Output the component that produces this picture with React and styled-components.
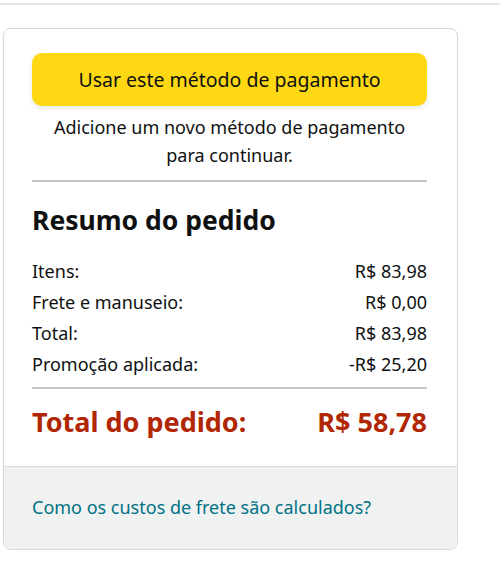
import React from 'react'
import styled, { createGlobalStyle } from 'styled-components'

const GlobalStyle = createGlobalStyle`
  body {
    margin: 0;
    background: #fff;
    font-family: 'Noto Sans', Arial, sans-serif;
    color: #0f1111;
  }
`

const rows = [
  { label: 'Itens:', value: 'R$ 83,98' },
  { label: 'Frete e manuseio:', value: 'R$ 0,00' },
  { label: 'Total:', value: 'R$ 83,98' },
  { label: 'Promoção aplicada:', value: '-R$ 25,20' },
]

const App = () => {
  return (
    <>
      <GlobalStyle />
      <TopStrip />
      <Card>
        <Body>
          <PayButton type="button">Usar este método de pagamento</PayButton>
          <Hint>
            Adicione um novo método de pagamento
            <br />
            para continuar.
          </Hint>
          <Divider />
          <Heading>Resumo do pedido</Heading>
          <Rows>
            {rows.map((r) => (
              <Row key={r.label}>
                <span>{r.label}</span>
                <span>{r.value}</span>
              </Row>
            ))}
          </Rows>
          <Divider $tight />
          <GrandTotal>
            <span>Total do pedido:</span>
            <span>R$ 58,78</span>
          </GrandTotal>
        </Body>
        <Footer>
          <FooterLink href="#">Como os custos de frete são calculados?</FooterLink>
        </Footer>
      </Card>
    </>
  )
}

const TopStrip = styled.div`
  height: 3px;
  border-bottom: 2px solid #e6e6e6;
`

const Card = styled.div`
  width: 455px;
  box-sizing: border-box;
  margin: 23px 0 0 3px;
  border: 1px solid #d5d9d9;
  border-radius: 8px;
  overflow: hidden;
`

const Body = styled.div`
  display: flex;
  flex-direction: column;
  padding: 24px 30px 28px 28px;
`

const PayButton = styled.button`
  height: 53px;
  border: none;
  border-radius: 10px;
  background: #ffd814;
  box-shadow: 0 2px 5px rgba(213, 217, 217, 0.6);
  font-family: inherit;
  font-size: 19.5px;
  color: #0f1111;
  cursor: pointer;
`

const Hint = styled.p`
  margin: 7px 0 0;
  text-align: center;
  font-size: 18px;
  line-height: 28px;
`

const Divider = styled.hr`
  width: 100%;
  margin: ${(p) => (p.$tight ? '7px 0 0' : '11px 0 0')};
  border: none;
  border-top: 2px solid #c4c7c7;
`

const Heading = styled.h2`
  margin: 22px 0 0;
  font-size: 26.5px;
  line-height: 32px;
  font-weight: 700;
`

const Rows = styled.div`
  display: flex;
  flex-direction: column;
  margin-top: 20px;
`

const Row = styled.div`
  display: flex;
  justify-content: space-between;
  font-size: 18px;
  line-height: 31px;
  color: #0f1111;
`

const GrandTotal = styled.div`
  display: flex;
  justify-content: space-between;
  margin-top: 17px;
  font-size: 27px;
  line-height: 32px;
  font-weight: 700;
  color: #b12704;
`

const Footer = styled.div`
  padding: 28px 28px 30px;
  border-top: 1px solid #d5d9d9;
  background: #f0f2f2;
`

const FooterLink = styled.a`
  font-size: 18px;
  line-height: 24px;
  color: #007185;
  text-decoration: none;
`

export default App
